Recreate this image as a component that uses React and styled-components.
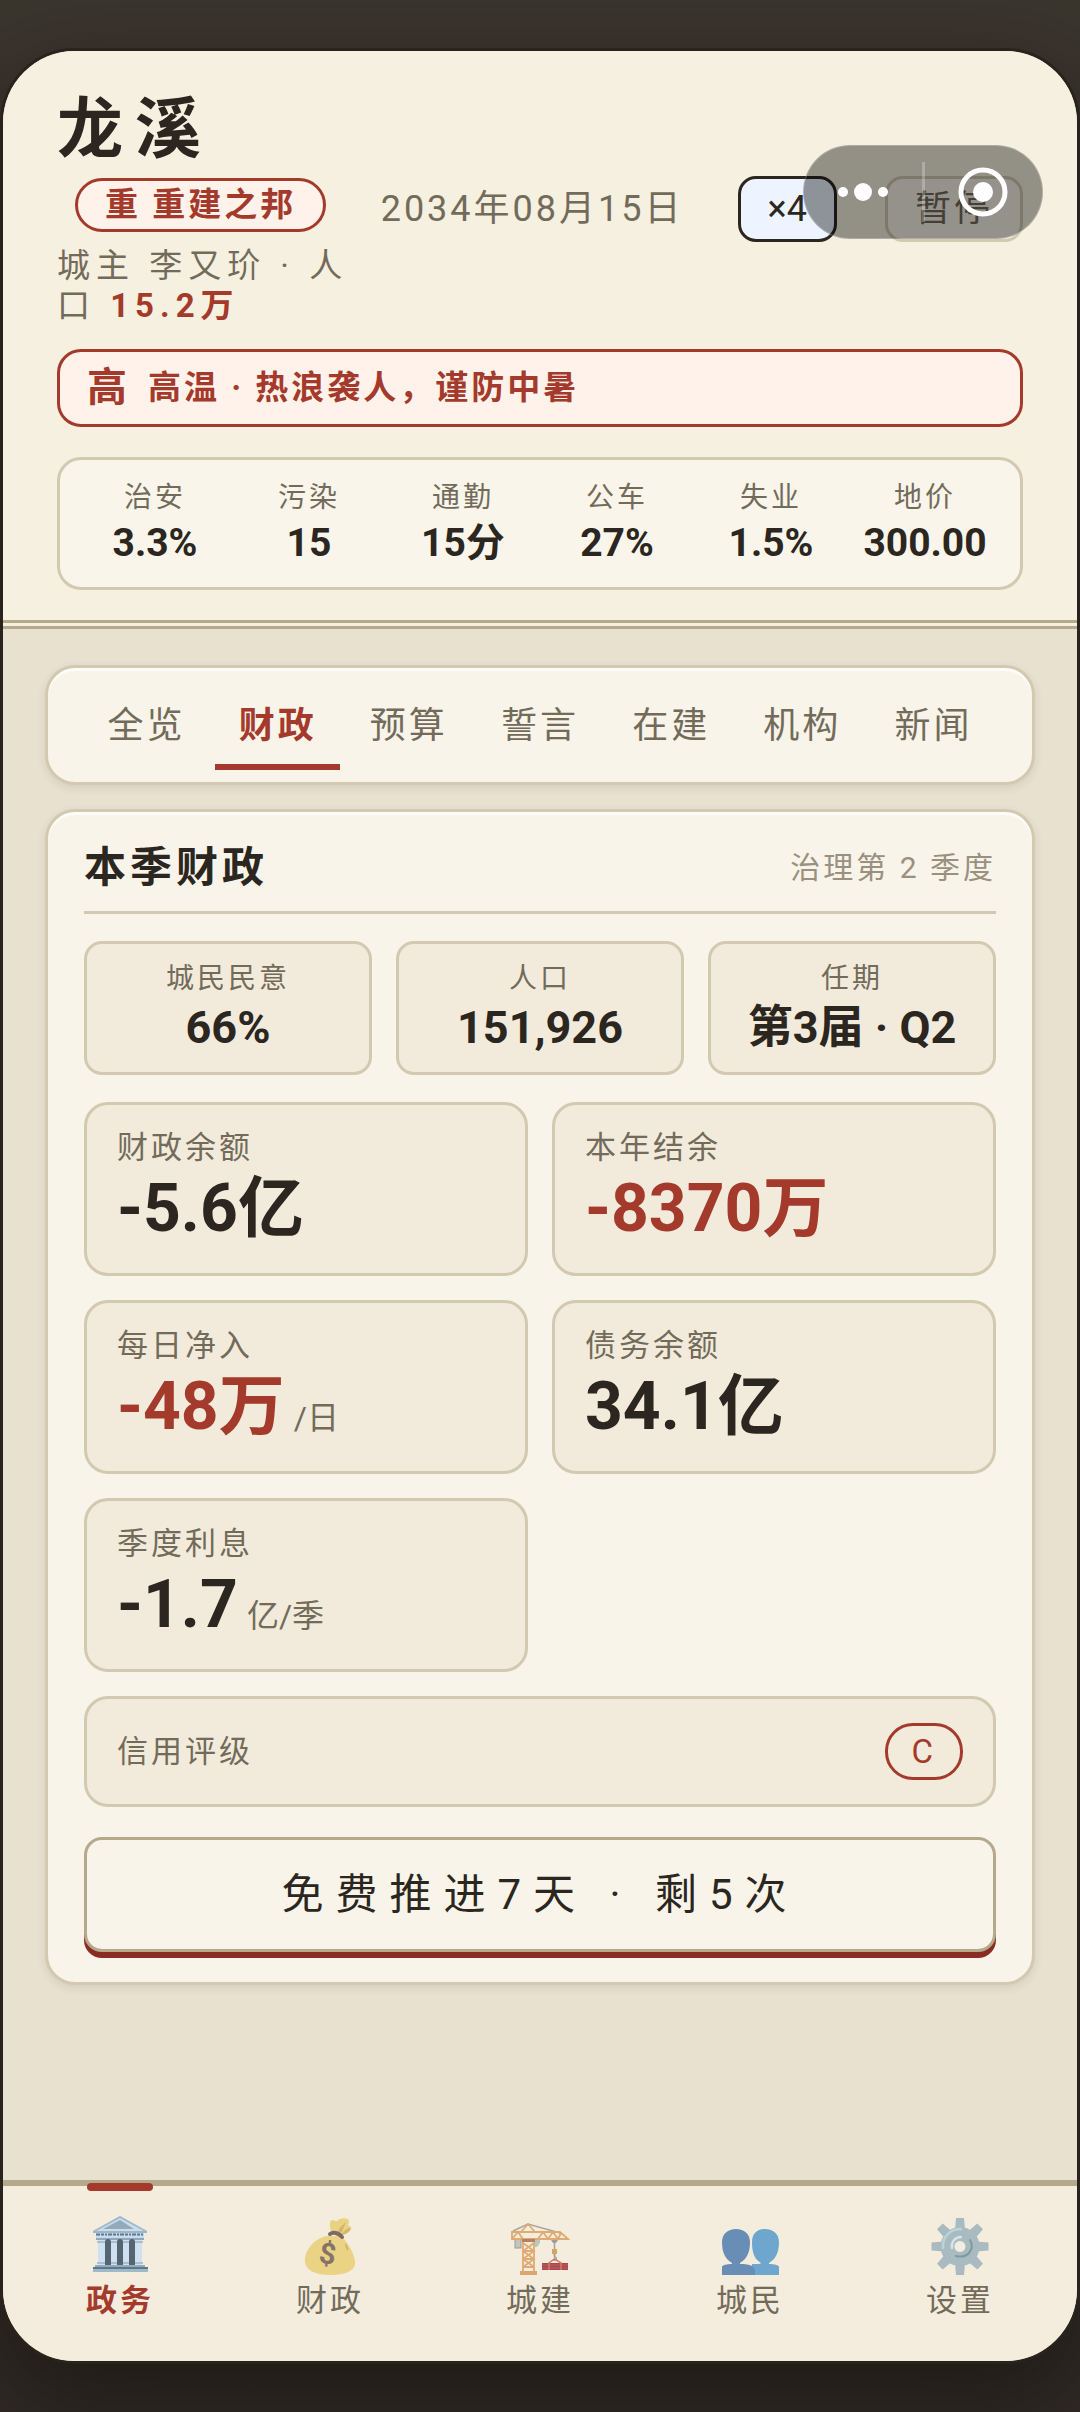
import React, { useState } from "react";
import styled, { createGlobalStyle, css } from "styled-components";

const c = {
  ink: "#2b2620",
  muted: "#736b5a",
  faint: "#9a9080",
  red: "#a43a2b",
  redDeep: "#8a2c22",
  line: "#d3c9b1",
  lineStrong: "#b5a98b",
  paper: "#f8f4e9",
  cell: "#f2ebdc",
  blush: "#fef2ea",
};

const Global = createGlobalStyle`
  *, *::before, *::after { box-sizing: border-box; }
  body {
    margin: 0;
    color: ${c.ink};
    font-family: Roboto, "Noto Sans CJK SC", sans-serif;
    background: #39342c;
  }
  button {
    margin: 0;
    font-family: inherit;
    color: inherit;
    cursor: pointer;
  }
  h1, h2, p { margin: 0; }
`;

const Stage = styled.div`
  position: relative;
  display: flex;
  min-height: 100vh;
  padding: 48px 0;
  overflow: hidden;
  background: linear-gradient(180deg, #3a352d 0%, #302a25 100%);
`;

const Phone = styled.div`
  flex: 1;
  min-width: 0;
  display: flex;
  flex-direction: column;
  border: 3px solid #28241d;
  border-radius: 75px;
  overflow: hidden;
  background: #e8e1cf;
  box-shadow: 0 36px 90px rgba(20, 18, 14, 0.65);
`;

const Header = styled.header`
  padding: 40px 54px 30px;
  background: #f6f0e0;
  border-bottom: 9px double ${c.lineStrong};
`;

const TopRow = styled.div`
  display: flex;
  align-items: center;
  gap: 27px;
`;

const Identity = styled.div`
  flex: 1;
  min-width: 0;
  display: flex;
  flex-direction: column;
  align-items: flex-start;
`;

const CityName = styled.h1`
  font-size: 66px;
  line-height: 78px;
  font-weight: 700;
  letter-spacing: 12px;
`;

const Badge = styled.span`
  margin: 9px 0 14px 18px;
  padding: 0 27px;
  border: 3px solid ${c.red};
  border-radius: 27px;
  background: ${c.blush};
  color: ${c.red};
  font-size: 33px;
  line-height: 48px;
  font-weight: 700;
  letter-spacing: 3px;
  white-space: nowrap;
`;

const Lord = styled.p`
  color: ${c.muted};
  font-size: 33px;
  line-height: 40px;
  letter-spacing: 6px;

  strong {
    color: ${c.red};
    font-weight: 700;
  }
`;

const Controls = styled.div`
  flex: none;
  display: flex;
  align-items: center;
  gap: 48px;
`;

const GameDate = styled.time`
  padding-right: 6px;
  color: ${c.muted};
  font-size: 36px;
  line-height: 44px;
  letter-spacing: 3px;
  white-space: nowrap;
`;

const SpeedButton = styled.button`
  padding: 0 27px;
  border: 3px solid ${c.line};
  border-radius: 18px;
  background: ${c.paper};
  color: ${c.muted};
  font-size: 36px;
  line-height: 60px;
  letter-spacing: 3px;
  white-space: nowrap;

  ${(p) =>
    p.$active &&
    css`
      border-color: ${c.ink};
      background: #edf3ff;
      color: ${c.ink};
      letter-spacing: 0;
    `}
`;

const Alert = styled.div`
  display: flex;
  align-items: center;
  gap: 18px;
  margin-top: 23px;
  padding: 0 27px;
  border: 3px solid ${c.red};
  border-radius: 24px;
  background: ${c.blush};
  color: ${c.red};
  font-size: 33px;
  line-height: 72px;
  font-weight: 700;
  letter-spacing: 3px;
`;

const AlertMark = styled.span`
  font-size: 40px;
`;

const StatBar = styled.div`
  display: grid;
  grid-template-columns: repeat(6, 1fr);
  margin-top: 30px;
  padding: 18px;
  border: 3px solid ${c.line};
  border-radius: 24px;
  background: #f9f5ea;
  text-align: center;
`;

const SmallLabel = styled.div`
  color: ${c.muted};
  font-size: 28px;
  line-height: 40px;
  letter-spacing: 3px;
`;

const StatValue = styled.div`
  font-size: 39px;
  line-height: 51px;
  font-weight: 700;
  white-space: nowrap;
`;

const Main = styled.main`
  flex: 1;
  display: flex;
  flex-direction: column;
  gap: 24px;
  padding: 36px 42px;
`;

const sheet = css`
  border: 3px solid ${c.line};
  border-radius: 30px;
  background: ${c.paper};
  box-shadow: inset 0 3px 0 rgba(255, 255, 255, 0.7), 0 3px 9px rgba(60, 50, 30, 0.1);
`;

const Tabs = styled.div`
  ${sheet}
  display: flex;
  gap: 6px;
  padding: 12px 36px;
`;

const Tab = styled.button`
  flex: 1;
  height: 90px;
  padding: 2px 0 0;
  border: 0;
  background: none;
  color: ${c.muted};
  font-size: 36px;
  line-height: 44px;
  letter-spacing: 3px;
  white-space: nowrap;

  ${(p) =>
    p.$active &&
    css`
      color: ${c.red};
      font-weight: 700;
      box-shadow: inset 0 -6px 0 ${c.red};
    `}
`;

const Panel = styled.section`
  ${sheet}
  padding: 27px 36px 30px;
`;

const PanelHead = styled.div`
  display: flex;
  align-items: center;
  justify-content: space-between;
  padding-bottom: 15px;
  border-bottom: 3px solid ${c.line};
`;

const PanelTitle = styled.h2`
  font-size: 42px;
  line-height: 57px;
  font-weight: 700;
  letter-spacing: 4px;
`;

const PanelNote = styled.span`
  color: ${c.faint};
  font-size: 30px;
  line-height: 57px;
  letter-spacing: 3px;
`;

const Trio = styled.div`
  display: grid;
  grid-template-columns: repeat(3, 1fr);
  gap: 24px;
  margin-top: 27px;
`;

const TrioCell = styled.div`
  padding: 15px 0 16px;
  border: 3px solid ${c.line};
  border-radius: 18px;
  background: ${c.cell};
  text-align: center;
`;

const TrioValue = styled.div`
  font-size: 45px;
  line-height: 57px;
  font-weight: 700;
  white-space: nowrap;
`;

const Ledger = styled.div`
  display: grid;
  grid-template-columns: repeat(2, 1fr);
  gap: 24px;
  margin-top: 27px;
`;

const LedgerCell = styled.div`
  padding: 21px 30px 25px;
  border: 3px solid ${c.line};
  border-radius: 24px;
  background: ${c.cell};
`;

const Label = styled.div`
  color: ${c.muted};
  font-size: 31px;
  line-height: 44px;
  letter-spacing: 3px;
`;

const Amount = styled.div`
  color: ${(p) => (p.$negative ? c.red : c.ink)};
  font-size: 66px;
  line-height: 78px;
  font-weight: 700;
  white-space: nowrap;
`;

const Unit = styled.span`
  margin-left: 9px;
  color: ${c.muted};
  font-size: 32px;
  line-height: 40px;
  font-weight: 400;
`;

const RatingRow = styled.div`
  display: flex;
  grid-column: 1 / -1;
  align-items: center;
  justify-content: space-between;
  padding: 24px 30px;
  border: 3px solid ${c.line};
  border-radius: 24px;
  background: ${c.cell};
`;

const Grade = styled.span`
  padding: 0 24px;
  border: 3px solid ${c.red};
  border-radius: 28px;
  color: ${c.red};
  font-size: 33px;
  line-height: 51px;
  letter-spacing: 3px;
`;

const AdvanceButton = styled.button`
  display: block;
  width: 100%;
  height: 115px;
  margin-top: 30px;
  padding: 0;
  border: 3px solid ${c.lineStrong};
  border-radius: 18px;
  background: ${c.paper};
  box-shadow: 0 6px 0 ${c.redDeep};
  font-size: 42px;
  line-height: 57px;
  letter-spacing: 12px;
`;

const BottomNav = styled.nav`
  display: grid;
  grid-template-columns: repeat(5, 1fr);
  padding: 0 12px;
  border-top: 6px solid ${c.lineStrong};
  background: #f4edde;
`;

const NavItem = styled.button`
  position: relative;
  display: flex;
  flex-direction: column;
  align-items: center;
  gap: 3px;
  padding: 30px 0 38px;
  border: 0;
  background: none;
  color: ${c.muted};
  font-size: 31px;
  line-height: 44px;
  letter-spacing: 3px;

  ${(p) =>
    p.$active &&
    css`
      color: ${c.red};
      font-weight: 700;

      &::before {
        content: "";
        position: absolute;
        top: -3px;
        left: calc(50% - 33px);
        width: 66px;
        height: 8px;
        border-radius: 4px;
        background: ${c.red};
      }
    `}
`;

const NavIcon = styled.svg`
  display: block;
  width: 60px;
  height: 60px;
`;

const Capsule = styled.div`
  position: absolute;
  top: 145px;
  right: 37px;
  display: flex;
  align-items: center;
  width: 240px;
  height: 94px;
  border: 1px solid rgba(255, 255, 255, 0.25);
  border-radius: 47px;
  background: rgba(0, 0, 0, 0.4);
`;

const CapsuleButton = styled.button`
  flex: 1;
  display: flex;
  justify-content: center;
  align-items: center;
  height: 100%;
  padding: 0;
  border: 0;
  background: none;
`;

const CapsuleDivider = styled.span`
  width: 3px;
  height: 60px;
  background: rgba(255, 255, 255, 0.25);
`;

const HallIcon = () => (
  <NavIcon viewBox="0 0 60 60" aria-hidden="true">
    <path d="M30 0 L57 15 V17 H3 V15 Z" fill="#c8dcee" />
    <path d="M30 0 L57 15 V17 H3 V15 L30 0 M30 2 L6 15 H54 Z" fill="#9fb6c6" fillRule="evenodd" />
    <path d="M30 4 L44 13 H13 Z" fill="#92aabb" />
    <rect x="6" y="17" width="48" height="6" fill="#c8dcee" />
    <path d="M6 18.500H54" stroke="#5f7685" strokeWidth="2" strokeDasharray="4 1 3 1 2 1" />
    <rect x="6" y="22" width="48" height="2" fill="#8fa8b9" />
    <rect x="8" y="24" width="44" height="26" fill="#cfe0f1" />
    <path d="M7 26h8M21 26h6M33 26h6M45 26h8M7 47h8M21 47h6M33 47h6M45 47h8" stroke="#9db4c6" strokeWidth="1.500" />
    <path d="M18 26V48M30 26V48M42 26V48" stroke="#556672" strokeWidth="6" strokeLinecap="round" />
    <rect x="5" y="49" width="50" height="3" fill="#94abbb" />
    <rect x="3" y="51" width="55" height="3" fill="#5f7887" />
    <rect x="3" y="53" width="55" height="3" fill="#9fb9cb" />
  </NavIcon>
);

const MoneyIcon = () => (
  <NavIcon viewBox="0 0 60 60" aria-hidden="true">
    <path d="M31 15 C29 9 30 4 32 4 C35 4 36 6 37 5 C41 1 49 2 49 5 C49 8 47 10 50 10 C53 12 48 18 42 19 Z" fill="#e9d284" />
    <path d="M38 16 C39 11 43 9 46 6 C44 10 44 12 42 16Z M42 18 C45 13 48 12 51 12 C50 16 46 18 42 19Z" fill="#d4b66c" />
    <path d="M30 20 C20 19 6 30 5 43 C4 54 15 59 30 59 C46 59 56 55 55 45 C54 36 46 24 41 20 Z" fill="#ebd385" />
    <path d="M45 27 C48 30 49 33 48 35 C46 33 45 30 45 27Z" fill="#d0b168" />
    <path d="M30 18 C34 15 40 18 42 21" fill="none" stroke="#7d6a60" strokeWidth="4" strokeLinecap="round" />
    <text x="29" y="48" fontFamily="Roboto, sans-serif" fontSize="29" fontWeight="700" textAnchor="middle" fill="#867267" transform="rotate(8 29 38)">$</text>
  </NavIcon>
);

const CraneIcon = () => (
  <NavIcon viewBox="0 0 60 60" aria-hidden="true">
    <path d="M3 15 L18 8 L50 17" fill="none" stroke="#a7a6a0" strokeWidth="1.500" />
    <rect x="5" y="23" width="6" height="9" fill="#c6c5bd" stroke="#999b98" />
    <g fill="none" stroke="#dfab72" strokeWidth="1.800">
      <path d="M2 16 H50 L58 23 H2 Z" />
      <path d="M2 23 L8 16 L13 23 M11 16 L18 8 L25 16 M28 23 L33 16 L38 23 L43 16 L48 23 L51 17" />
      <path d="M13 26 V56 M24 26 V56 M13 27 L24 35 L13 43 L24 51 M24 27 L13 35 L24 43 L13 51 M13 35H24 M13 43H24 M13 51H24" />
    </g>
    <rect x="12" y="23" width="13" height="3" fill="#bd7e5a" />
    <path d="M25 24 h5 v3 l-3 4 h-2z" fill="#b9c6c2" />
    <rect x="10" y="55" width="17" height="4" fill="#dba66f" />
    <path d="M41 24h7l-2 3h-3z" fill="#9c9c99" />
    <path d="M44.500 26V40" stroke="#a2a29e" strokeWidth="1.500" />
    <rect x="42" y="33" width="5" height="5" fill="#d5a45f" />
    <path d="M44.500 38v3c3 0 2 4 -1 3" fill="none" stroke="#9aa09f" strokeWidth="1.500" />
    <rect x="32" y="47" width="26" height="7" fill="#a9474f" />
    <path d="M32 49h26M32 52h26" stroke="#c0606a" strokeWidth="1" />
    <path d="M39 54V47L44.500 43L51 47V54" fill="none" stroke="#d27f62" strokeWidth="1.500" />
  </NavIcon>
);

const PeopleIcon = () => (
  <NavIcon viewBox="0 0 60 60" aria-hidden="true">
    <path d="M45 13 C53 13 59 18 59 26 C59 36 56 43 49 47 V48 C54 48 59 49 59 51 V59 H32 V48 C38 48 41 48 41 47 C34 43 32 36 32 26 C32 18 37 13 45 13Z" fill="#6fa6cd" />
    <path d="M16 13 C24 13 30 18 30 26 C30 36 27 43 20 47 V48 C28 48 35 49 35 55 V59 H2 V51 C2 49 7 48 12 48 V47 C5 43 2 36 2 26 C2 18 8 13 16 13Z" fill="#698eb6" />
  </NavIcon>
);

const GearIcon = () => (
  <NavIcon viewBox="0 0 60 60" aria-hidden="true">
    <g fill="#a9bac0">
      {[0, 45, 90, 135, 180, 225, 270, 315].map((angle) => (
        <path key={angle} d="M25 14 L26 2 H34 L35 14 Z" transform={`rotate(${angle} 30 30.500)`} />
      ))}
      <path fillRule="evenodd" d="M30 11 a19.500 19.500 0 1 0 0.100 0 Z M30 25 a5.500 5.500 0 1 1 -0.100 0 Z" />
    </g>
    <path d="M13 32 C12 21 20 13 31 13" fill="none" stroke="#b7d5da" strokeWidth="2.500" strokeLinecap="round" />
    <path d="M22 32 C21 26 25 21 31 21" fill="none" stroke="#cfe5e8" strokeWidth="2.500" strokeLinecap="round" />
    <path d="M40 24 C45 33 38 43 26 40" fill="none" stroke="#7d9a9e" strokeWidth="2" strokeLinecap="round" />
  </NavIcon>
);

const stats = [
  ["治安", "3.3%"],
  ["污染", "15"],
  ["通勤", "15分"],
  ["公车", "27%"],
  ["失业", "1.5%"],
  ["地价", "300.00"],
];

const tabs = ["全览", "财政", "预算", "誓言", "在建", "机构", "新闻"];

const summary = [
  ["城民民意", "66%"],
  ["人口", "151,926"],
  ["任期", "第3届 · Q2"],
];

const ledger = [
  { label: "财政余额", value: "-5.6亿" },
  { label: "本年结余", value: "-8370万", negative: true },
  { label: "每日净入", value: "-48万", unit: "/日", negative: true },
  { label: "债务余额", value: "34.1亿" },
  { label: "季度利息", value: "-1.7", unit: "亿/季" },
];

const navItems = [
  ["政务", HallIcon],
  ["财政", MoneyIcon],
  ["城建", CraneIcon],
  ["城民", PeopleIcon],
  ["设置", GearIcon],
];

export default function App() {
  const [tab, setTab] = useState("财政");
  const [section, setSection] = useState("政务");

  return (
    <>
      <Global />
      <Stage>
        <Phone>
          <Header>
            <TopRow>
              <Identity>
                <CityName>龙溪</CityName>
                <Badge>重 重建之邦</Badge>
                <Lord>
                  城主 李又玠 · 人口 <strong>15.2万</strong>
                </Lord>
              </Identity>
              <Controls>
                <GameDate dateTime="2034-08-15">2034年08月15日</GameDate>
                <SpeedButton type="button" $active>×4</SpeedButton>
                <SpeedButton type="button">暂停</SpeedButton>
              </Controls>
            </TopRow>
            <Alert role="status">
              <AlertMark>高</AlertMark>
              <span>高温 · 热浪袭人，谨防中暑</span>
            </Alert>
            <StatBar>
              {stats.map(([label, value]) => (
                <div key={label}>
                  <SmallLabel>{label}</SmallLabel>
                  <StatValue>{value}</StatValue>
                </div>
              ))}
            </StatBar>
          </Header>

          <Main>
            <Tabs role="tablist">
              {tabs.map((name) => (
                <Tab
                  key={name}
                  type="button"
                  role="tab"
                  aria-selected={name === tab}
                  $active={name === tab}
                  onClick={() => setTab(name)}
                >
                  {name}
                </Tab>
              ))}
            </Tabs>

            <Panel>
              <PanelHead>
                <PanelTitle>本季财政</PanelTitle>
                <PanelNote>治理第 2 季度</PanelNote>
              </PanelHead>
              <Trio>
                {summary.map(([label, value]) => (
                  <TrioCell key={label}>
                    <SmallLabel>{label}</SmallLabel>
                    <TrioValue>{value}</TrioValue>
                  </TrioCell>
                ))}
              </Trio>
              <Ledger>
                {ledger.map((item) => (
                  <LedgerCell key={item.label}>
                    <Label>{item.label}</Label>
                    <Amount $negative={item.negative}>
                      {item.value}
                      {item.unit && <Unit>{item.unit}</Unit>}
                    </Amount>
                  </LedgerCell>
                ))}
                <RatingRow>
                  <Label>信用评级</Label>
                  <Grade>C</Grade>
                </RatingRow>
              </Ledger>
              <AdvanceButton type="button">免费推进7天 · 剩5次</AdvanceButton>
            </Panel>
          </Main>

          <BottomNav>
            {navItems.map(([name, Icon]) => (
              <NavItem
                key={name}
                type="button"
                $active={name === section}
                onClick={() => setSection(name)}
              >
                <Icon />
                {name}
              </NavItem>
            ))}
          </BottomNav>
        </Phone>

        <Capsule>
          <CapsuleButton type="button" aria-label="更多">
            <svg width="50" height="20" viewBox="0 0 50 20" fill="#fff">
              <circle cx="5" cy="10" r="5" />
              <circle cx="25" cy="10" r="9" />
              <circle cx="45" cy="10" r="5" />
            </svg>
          </CapsuleButton>
          <CapsuleDivider />
          <CapsuleButton type="button" aria-label="关闭">
            <svg width="50" height="50" viewBox="0 0 50 50">
              <circle cx="25" cy="25" r="22" fill="none" stroke="#fff" strokeWidth="5" />
              <circle cx="25" cy="25" r="10" fill="#fff" />
            </svg>
          </CapsuleButton>
        </Capsule>
      </Stage>
    </>
  );
}
